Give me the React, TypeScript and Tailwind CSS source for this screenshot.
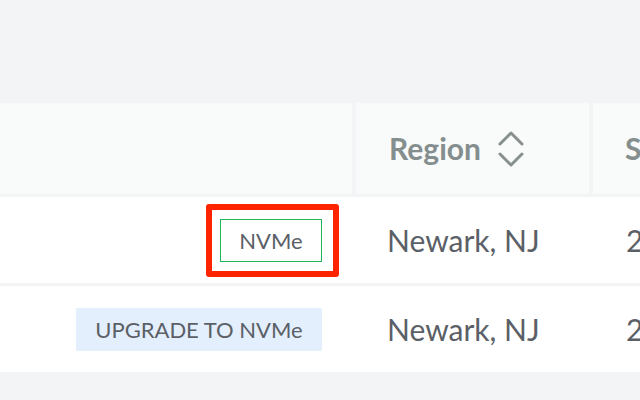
import { useState } from 'react';

function SortIcon() {
  return (
    <svg width="28" height="38" viewBox="0 0 28 38" fill="none" stroke="#87908f" strokeWidth="3" strokeLinecap="round" strokeLinejoin="round">
      <path d="M3 14 L14 3 L25 14" />
      <path d="M3 24 L14 35 L25 24" />
    </svg>
  );
}

export default function App() {
  const [rows] = useState([
    { id: 1, nvme: true, region: 'Newark, NJ' },
    { id: 2, nvme: false, region: 'Newark, NJ' },
  ]);

  return (
    <div className="w-[640px] h-[400px] overflow-hidden bg-[#f3f4f6] font-['Lato','Liberation_Sans',sans-serif] text-[#5b6067]">
      <div className="pt-[103px]">
        {/* Header */}
        <div className="flex h-[91px] gap-[4px]">
          <div className="w-[352px] shrink-0 bg-[#f9fafa]" />
          <div className="w-[233px] shrink-0 bg-[#f9fafa] flex items-center pl-[33px]">
            <span className="text-[30px] font-bold text-[#858e8e]">Region</span>
            <span className="ml-[16px] mt-[1px]"><SortIcon /></span>
          </div>
          <div className="flex-1 bg-[#f9fafa] flex items-center pl-[32px]">
            <span className="text-[30px] font-bold text-[#858e8e]">S</span>
          </div>
        </div>

        {/* Rows */}
        <div className="mt-[3px] flex flex-col gap-[3px]">
          {rows.map((r) => (
            <div key={r.id} className="flex h-[86px] bg-white items-center">
              <div className="w-[352px] shrink-0 flex justify-end pr-[30px]">
                {r.nvme ? (
                  <div className="relative">
                    <div className="absolute -left-[14px] -right-[17px] -top-[15px] -bottom-[15px] border-[6px] border-[#ff2400] rounded-[3px]" />
                    <div className="w-[102px] h-[43px] border border-[#1fb55a] flex items-center justify-center text-[22px]">
                      NVMe
                    </div>
                  </div>
                ) : (
                  <div className="w-[246px] h-[43px] bg-[#e3effd] rounded-[2px] flex items-center justify-center text-[22px]">
                    UPGRADE TO NVMe
                  </div>
                )}
              </div>
              <div className="w-[237px] shrink-0 pl-[35px] text-[30px]">{r.region}</div>
              <div className="flex-1 pl-[37px] text-[30px]">2</div>
            </div>
          ))}
        </div>
      </div>
    </div>
  );
}
